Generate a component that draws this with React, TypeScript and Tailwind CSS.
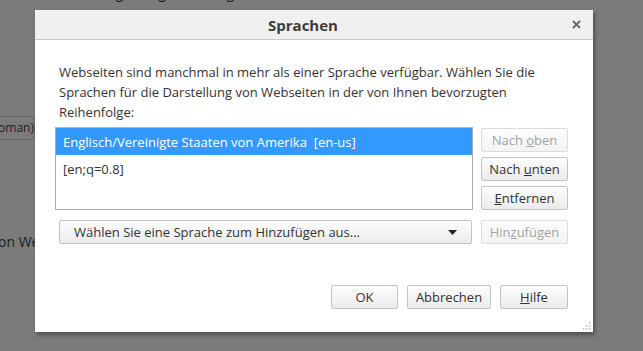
import React from "react";

const btn =
  "h-[24px] rounded-[2px] border border-[#c3c3c3] bg-gradient-to-b from-[#fdfdfd] to-[#ebebeb] text-[13px] leading-[22px] text-center";

export default function App() {
  return (
    <div
      className="relative w-[643px] h-[351px] overflow-hidden bg-[#7b7b7b] text-[#1e1e1e]"
      style={{ fontFamily: '"Open Sans", "Liberation Sans", sans-serif' }}
    >
      {/* background page */}
      <div className="flex flex-col">
        <div className="-mt-[16px] pl-[108px] text-[14px] leading-[18px] text-[#1a1a1a] whitespace-nowrap">
          ag eine gute Anzeige
        </div>
        <div className="mt-[114px] flex">
          <div className="w-[35px] h-[24px] border-y border-r border-[#656565] rounded-r-[2px] text-[12px] leading-[22px] flex justify-end overflow-hidden whitespace-nowrap">
            <span>oman)</span>
          </div>
        </div>
        <div className="mt-[92px] text-[14px] leading-[20px] whitespace-nowrap -ml-[2px]">
          on Webseiten
        </div>
      </div>

      {/* dialog */}
      <div className="absolute left-[35px] top-[10px] w-[558px] h-[322px] bg-white shadow-[2px_3px_4px_rgba(0,0,0,0.35)] flex flex-col">
        <div className="h-[30px] bg-[#f0f0f0] border-b border-[#c9c9c9] flex items-center relative">
          <div className="flex-1 text-center pr-[22px] text-[15px] font-bold text-[#3c3c3c] leading-[30px]">
            Sprachen
          </div>
          <svg
            className="absolute right-[12px] top-[10px]"
            width="9"
            height="9"
            viewBox="0 0 9 9"
          >
            <path d="M1 1L8 8M8 1L1 8" stroke="#6a6a6a" strokeWidth="2" />
          </svg>
        </div>

        <div className="flex-1 flex flex-col text-[#333] text-[13px]">
          <p className="pl-[24px] pr-[30px] pt-[22px] leading-[20px]">
            Webseiten sind manchmal in mehr als einer Sprache verfügbar. Wählen Sie die
            Sprachen für die Darstellung von Webseiten in der von Ihnen bevorzugten
            Reihenfolge:
          </p>

          <div className="flex mt-[5px] pl-[20px] gap-[8px]">
            <div className="w-[418px] h-[83px] border border-[#acacac] border-t-[#8fbff5] bg-white">
              <div className="h-[27px] bg-[#3399ff] text-white leading-[28px] pl-[7px] whitespace-pre">
                {"Englisch/Vereinigte Staaten von Amerika  [en-us]"}
              </div>
              <div className="h-[27px] leading-[28px] pl-[7px] text-[#333]">[en;q=0.8]</div>
            </div>
            <div className="flex flex-col gap-[5px] pt-[1px]">
              <div className={btn + " w-[87px] text-[#a3a3a3] border-[#dcdcdc] from-[#fafafa] to-[#f3f3f3]"}>
                Nach <span className="underline">o</span>ben
              </div>
              <div className={btn + " w-[87px]"}>
                Nach <span className="underline">u</span>nten
              </div>
              <div className={btn + " w-[87px]"}>
                <span className="underline">E</span>ntfernen
              </div>
            </div>
          </div>

          <div className="flex mt-[10px] pl-[24px] gap-[9px]">
            <div className={btn + " w-[413px] flex items-center justify-between pl-[14px] pr-[14px] text-[#333]"}>
              <span>Wählen Sie eine Sprache zum Hinzufügen aus...</span>
              <svg width="9" height="5" viewBox="0 0 9 5">
                <path d="M0 0H9L4.5 5Z" fill="#222" />
              </svg>
            </div>
            <div className={btn + " w-[87px] text-[#a3a3a3] border-[#dcdcdc] from-[#fafafa] to-[#f3f3f3]"}>
              Hin<span className="underline">z</span>ufügen
            </div>
          </div>

          <div className="flex justify-end gap-[9px] mt-[41px] pr-[25px]">
            <div className={btn + " w-[67px] text-[#333]"}>OK</div>
            <div className={btn + " w-[84px] text-[#333]"}>Abbrechen</div>
            <div className={btn + " w-[68px] text-[#333]"}>
              <span className="underline">H</span>ilfe
            </div>
          </div>
        </div>

        <svg className="absolute right-[2px] bottom-[2px]" width="8" height="8" viewBox="0 0 8 8">
          <g fill="#b5b5b5">
            <rect x="6" y="0" width="1.5" height="1.5" />
            <rect x="3" y="3" width="1.5" height="1.5" />
            <rect x="6" y="3" width="1.5" height="1.5" />
            <rect x="0" y="6" width="1.5" height="1.5" />
            <rect x="3" y="6" width="1.5" height="1.5" />
            <rect x="6" y="6" width="1.5" height="1.5" />
          </g>
        </svg>
      </div>
    </div>
  );
}
